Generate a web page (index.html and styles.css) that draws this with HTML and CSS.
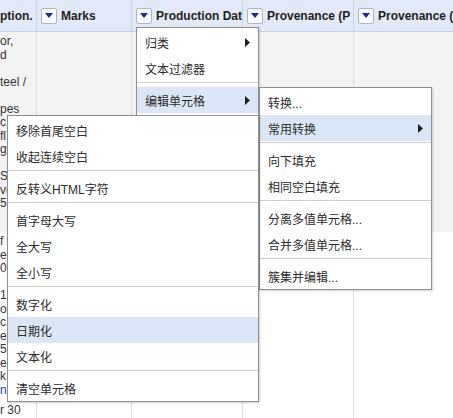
FILE: index.html
```html
<!DOCTYPE html>
<html>
<head>
<meta charset="utf-8">
<link rel="stylesheet" href="styles.css">
</head>
<body>
<div class="grid">
  <div class="hrow">
    <div class="hc c0"><span class="htext">ption.</span></div>
    <div class="hc c1"><span class="dd"><svg width="8" height="5" viewBox="0 0 8 5"><polygon points="0,0 8,0 4,5" fill="#1f2b8a"/></svg></span><span class="htext">Marks</span></div>
    <div class="hc c2"><span class="dd"><svg width="8" height="5" viewBox="0 0 8 5"><polygon points="0,0 8,0 4,5" fill="#1f2b8a"/></svg></span><span class="htext">Production Dat</span></div>
    <div class="hc c3"><span class="dd"><svg width="8" height="5" viewBox="0 0 8 5"><polygon points="0,0 8,0 4,5" fill="#1f2b8a"/></svg></span><span class="htext">Provenance (P</span></div>
    <div class="hc c4"><span class="dd"><svg width="8" height="5" viewBox="0 0 8 5"><polygon points="0,0 8,0 4,5" fill="#1f2b8a"/></svg></span><span class="htext">Provenance (</span></div>
  </div>
  <div class="row r1">
    <div class="cell c0"><div class="desc">or,<br>d<br>&nbsp;<br>teel /<br>&nbsp;<br>pes<br>c<br>fl<br>g<br>&nbsp;<br>S<br>ve<br>5i</div></div>
    <div class="cell c1"></div>
    <div class="cell c2"></div>
    <div class="cell c3"></div>
    <div class="cell c4"></div>
  </div>
  <div class="row r2">
    <div class="cell c0"><div class="desc">f<br>e<br>0),<br>&nbsp;<br>1<br>o<br>c<br>e(<br>5<br>el<br>k<br><span class="lnk">n</span></div></div>
    <div class="cell c1"></div>
    <div class="cell c2"></div>
    <div class="cell c3"></div>
    <div class="cell c4"></div>
  </div>
  <div class="row r3">
    <div class="cell c0"><div class="desc">r 30</div></div>
    <div class="cell c1"></div>
    <div class="cell c2"></div>
    <div class="cell c3"></div>
    <div class="cell c4"></div>
  </div>
</div>

<div class="menu m1">
  <div class="item"><span>归类</span><svg width="5" height="9" viewBox="0 0 5 9"><path d="M0 0 L5 4.5 L0 9Z" fill="#222"/></svg></div>
  <div class="item"><span>文本过滤器</span></div>
  <div class="sep"></div>
  <div class="item hl"><span>编辑单元格</span><svg width="5" height="9" viewBox="0 0 5 9"><path d="M0 0 L5 4.5 L0 9Z" fill="#222"/></svg></div>
  <div class="item"><span>编辑列</span></div>
  <div class="item"><span>转置</span></div>
  <div class="sep"></div>
  <div class="item"><span>排序...</span></div>
  <div class="item"><span>视图</span></div>
</div>

<div class="menu m2">
  <div class="item"><span>转换...</span></div>
  <div class="item hl"><span>常用转换</span><svg width="5" height="9" viewBox="0 0 5 9"><path d="M0 0 L5 4.5 L0 9Z" fill="#222"/></svg></div>
  <div class="sep"></div>
  <div class="item"><span>向下填充</span></div>
  <div class="item"><span>相同空白填充</span></div>
  <div class="sep"></div>
  <div class="item"><span>分离多值单元格...</span></div>
  <div class="item"><span>合并多值单元格...</span></div>
  <div class="sep"></div>
  <div class="item"><span>簇集并编辑...</span></div>
</div>

<div class="menu m3">
  <div class="item"><span>移除首尾空白</span></div>
  <div class="item"><span>收起连续空白</span></div>
  <div class="sep"></div>
  <div class="item"><span>反转义HTML字符</span></div>
  <div class="sep"></div>
  <div class="item"><span>首字母大写</span></div>
  <div class="item"><span>全大写</span></div>
  <div class="item"><span>全小写</span></div>
  <div class="sep"></div>
  <div class="item"><span>数字化</span></div>
  <div class="item hl"><span>日期化</span></div>
  <div class="item"><span>文本化</span></div>
  <div class="sep"></div>
  <div class="item"><span>清空单元格</span></div>
</div>
</body>
</html>
```
FILE: styles.css
```css
html, body {
  margin: 0;
  padding: 0;
}
body {
  width: 453px;
  height: 418px;
  overflow: hidden;
  position: relative;
  background: #fff;
  font-family: "Liberation Sans", "Noto Sans CJK SC", sans-serif;
  color: #222;
}
.grid {
  display: flex;
  flex-direction: column;
  width: 453px;
  height: 418px;
}
.hrow {
  display: flex;
  height: 32px;
  flex: none;
  box-sizing: border-box;
  background: #e3eaf7;
  border-bottom: 1px solid #c6d2ea;
}
.hc {
  display: flex;
  align-items: center;
  gap: 4px;
  padding-left: 4px;
  box-sizing: border-box;
  border-right: 1px solid #c9d4ea;
  overflow: hidden;
  white-space: nowrap;
  font-weight: bold;
  font-size: 12px;
  color: #1e1e1e;
}
.hc.c0 {
  padding-left: 0;
}
.c0 { width: 37px; flex: none; }
.c1 { width: 95px; flex: none; }
.c2 { width: 111px; flex: none; }
.c3 { width: 111px; flex: none; }
.c4 { flex: 1; }
.hc.c4 { border-right: none; }
.dd {
  width: 16px;
  height: 16px;
  box-sizing: border-box;
  border: 1px solid #a9b6d4;
  border-radius: 2px;
  background: #fbfcfe;
  display: flex;
  align-items: center;
  justify-content: center;
  flex: none;
}
.row {
  display: flex;
  flex: none;
}
.r1 {
  height: 200px;
  background: #f3f3f3;
}
.r2 {
  height: 169px;
}
.r3 {
  flex: 1;
  min-height: 0;
}
.cell {
  box-sizing: border-box;
  border-right: 1px solid #e0e0e0;
  overflow: hidden;
}
.cell.c4 { border-right: none; }
.desc {
  padding-top: 3px;
  font-size: 12px;
  line-height: 13.5px;
  color: #333;
  white-space: nowrap;
}
.lnk {
  color: #1c3fa8;
}
.menu {
  position: absolute;
  box-sizing: border-box;
  background: #fff;
  border: 1px solid #8f8f8f;
  padding: 1px 0 0;
  box-shadow: 1px 1px 2px rgba(0, 0, 0, 0.18);
  font-size: 12px;
  color: #2a2a2a;
}
.m1 { left: 136px; top: 27px; width: 123px; }
.m2 { left: 259px; top: 87px; width: 173px; }
.m3 { left: 7px; top: 115px; width: 252px; }
.item {
  height: 26px;
  padding: 0 8px;
  display: flex;
  align-items: center;
  justify-content: space-between;
  white-space: nowrap;
}
.item.hl {
  background: #dbe6f6;
}
.sep {
  height: 1px;
  background: #cfcfcf;
  margin: 1px 0 4px;
}
```
